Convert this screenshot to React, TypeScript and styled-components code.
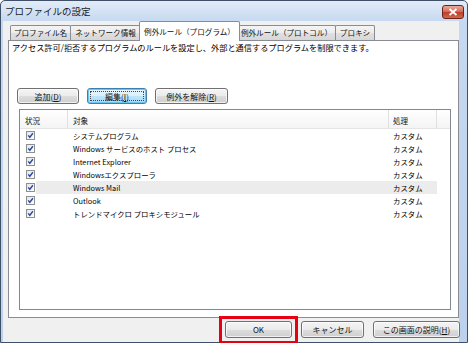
import React from 'react';
import styled, { createGlobalStyle } from 'styled-components';

const GlobalStyle = createGlobalStyle`
  html, body {
    margin: 0;
    padding: 0;
    background: #fff;
  }
  body {
    font-family: "Noto Sans CJK JP", "Noto Sans", sans-serif;
    color: #000;
  }
`;

const Window = styled.div`
  position: relative;
  width: 468px;
  height: 343px;
  box-sizing: border-box;
  border: 1px solid #3f5068;
  border-radius: 5px 5px 0 0;
  background: linear-gradient(180deg, #e2ecf8 0px, #c6d9f0 20px, #bcd1ec 100%);
  display: flex;
  flex-direction: column;
`;

const TitleBar = styled.div`
  flex: none;
  height: 20px;
  display: flex;
  align-items: center;
  justify-content: space-between;
  padding: 0 3px 0 4px;
`;

const Title = styled.span`
  font-size: 9.5px;
  line-height: 12px;
  color: #1a1a1a;
`;

const CloseButton = styled.div`
  width: 22px;
  height: 14px;
  margin-top: 2px;
  box-sizing: border-box;
  border: 1px solid #6b2217;
  border-radius: 3px;
  background: linear-gradient(180deg, #eba99b 0%, #d4705a 45%, #bf3d28 55%, #d06a4f 100%);
  display: flex;
  align-items: center;
  justify-content: center;
`;

const Client = styled.div`
  flex: 1;
  margin: 0 8px 0 2px;
  background: #f0f0f0;
  display: flex;
  flex-direction: column;
  padding-left: 5px;
`;

const TabStrip = styled.div`
  flex: none;
  height: 19px;
  display: flex;
  align-items: flex-end;
  padding-left: 2px;
`;

const Tab = styled.div<{ $w: number; $active?: boolean }>`
  position: relative;
  box-sizing: border-box;
  width: ${(p) => p.$w}px;
  height: ${(p) => (p.$active ? 20 : 15)}px;
  margin-left: ${(p) => (p.$active ? -2 : -1)}px;
  margin-right: ${(p) => (p.$active ? -2 : 0)}px;
  margin-bottom: ${(p) => (p.$active ? -1 : 0)}px;
  z-index: ${(p) => (p.$active ? 2 : 1)};
  border: 1px solid #898c95;
  border-bottom: none;
  border-radius: 2px 2px 0 0;
  background: ${(p) =>
    p.$active ? '#fff' : 'linear-gradient(180deg, #f4f4f4 0%, #ececec 50%, #e0e0e0 51%, #d6d6d6 100%)'};
  font-size: 7.6px;
  line-height: 10px;
  padding-top: ${(p) => (p.$active ? 5 : 2)}px;
  text-align: center;
  white-space: nowrap;
  color: #111;

  &:first-child {
    margin-left: 0;
  }
`;

const Panel = styled.div`
  flex: none;
  height: 278px;
  box-sizing: border-box;
  border: 1px solid #898c95;
  background: #fff;
  display: flex;
  flex-direction: column;
  padding: 1px 0 0 3px;
`;

const Description = styled.div`
  font-size: 8.2px;
  line-height: 10px;
  white-space: nowrap;
`;

const ButtonRow = styled.div`
  display: flex;
  gap: 8px;
  margin: 36px 0 0 5px;
`;

const Button = styled.div<{ $w: number; $h?: number; $focus?: boolean }>`
  position: relative;
  box-sizing: border-box;
  width: ${(p) => p.$w}px;
  height: ${(p) => p.$h ?? 16}px;
  border: 1px solid ${(p) => (p.$focus ? '#3c7fb1' : '#707070')};
  border-radius: 3px;
  background: ${(p) =>
    p.$focus
      ? 'linear-gradient(180deg, #eaf6fd 0%, #d9f0fc 50%, #bee6fd 51%, #a7d9f5 100%)'
      : 'linear-gradient(180deg, #f4f4f4 0%, #ebebeb 50%, #dddddd 51%, #cfcfcf 100%)'};
  box-shadow: inset 0 0 0 1px ${(p) => (p.$focus ? '#6fc3ef' : 'rgba(255,255,255,0.7)')};
  font-size: 8px;
  display: flex;
  align-items: center;
  justify-content: center;
  white-space: nowrap;
  color: #111;

  ${(p) =>
    p.$focus &&
    `&::after {
      content: '';
      position: absolute;
      inset: 2px;
      border: 1px dotted #444;
    }`}
`;

const ListView = styled.div`
  box-sizing: border-box;
  width: 432px;
  height: 201px;
  margin: 5px 0 0 7px;
  border: 1px solid #828790;
  background: #fff;
`;

const HeaderRow = styled.div`
  display: flex;
  height: 18px;
  border-bottom: 1px solid #e5e5e5;
  background: linear-gradient(180deg, #ffffff 0%, #f4f4f5 100%);
`;

const HeaderCell = styled.div<{ $w: number; $pad: number }>`
  box-sizing: border-box;
  width: ${(p) => p.$w}px;
  padding: 0 0 2px ${(p) => p.$pad}px;
  border-right: 1px solid #e0e0e0;
  font-size: 7.6px;
  line-height: 10px;
  display: flex;
  align-items: flex-end;
  color: #111;
`;

const Row = styled.div`
  display: flex;
  height: 13px;
`;

const CheckCell = styled.div`
  box-sizing: border-box;
  width: 16px;
  padding-left: 6px;
  display: flex;
  align-items: center;
`;

const RowBody = styled.div<{ $selected?: boolean }>`
  display: grid;
  grid-template-columns: 353px 48px;
  background: ${(p) => (p.$selected ? '#ececec' : 'transparent')};
  font-size: 7.4px;
  line-height: 13px;
  white-space: nowrap;
`;

const NameCell = styled.div`
  padding-left: 37px;
`;

const ActionCell = styled.div`
  padding-left: 4px;
`;

const FooterRow = styled.div`
  display: flex;
  justify-content: flex-end;
  gap: 9px;
  padding-top: 3px;
  margin-right: -1px;
`;

const Highlight = styled.div`
  position: relative;

  &::after {
    content: '';
    position: absolute;
    left: -6px;
    right: -6px;
    top: -5px;
    bottom: -6px;
    border: 3px solid #e60012;
  }
`;

const CheckBox = () => (
  <svg width="9" height="9" viewBox="0 0 9 9">
    <defs>
      <linearGradient id="cbg" x1="0" y1="0" x2="1" y2="1">
        <stop offset="0" stopColor="#dfe6ee" />
        <stop offset="1" stopColor="#ffffff" />
      </linearGradient>
    </defs>
    <rect x="0.5" y="0.5" width="8" height="8" fill="url(#cbg)" stroke="#8f8f8f" />
    <path d="M2.2 4.4 L3.8 6.3 L6.9 2.3" fill="none" stroke="#2b4a9c" strokeWidth="1.4" />
  </svg>
);

const tabs = [
  { label: 'プロファイル名', w: 61 },
  { label: 'ネットワーク情報', w: 71 },
  { label: '例外ルール（プログラム）', w: 101, active: true },
  { label: '例外ルール（プロトコル）', w: 99 },
  { label: 'プロキシ', w: 40 },
];

const programs = [
  'システムプログラム',
  'Windows サービスのホスト プロセス',
  'Internet Explorer',
  'Windowsエクスプローラ',
  'Windows Mail',
  'Outlook',
  'トレンドマイクロ プロキシモジュール',
];

export default function App() {
  return (
    <>
      <GlobalStyle />
      <Window>
        <TitleBar>
          <Title>プロファイルの設定</Title>
          <CloseButton>
            <svg width="10" height="8" viewBox="0 0 10 8">
              <path d="M1.5 1 L8.5 7 M8.5 1 L1.5 7" stroke="#fff" strokeWidth="1.8" />
            </svg>
          </CloseButton>
        </TitleBar>
        <Client>
          <TabStrip>
            {tabs.map((t) => (
              <Tab key={t.label} $w={t.w} $active={t.active}>
                {t.label}
              </Tab>
            ))}
          </TabStrip>
          <Panel>
            <Description>
              アクセス許可/拒否するプログラムのルールを設定し、外部と通信するプログラムを制限できます。
            </Description>
            <ButtonRow>
              <Button $w={62}>
                追加(<u>D</u>)
              </Button>
              <Button $w={60} $focus>
                編集(<u>I</u>)
              </Button>
              <Button $w={73}>
                例外を解除(<u>R</u>)
              </Button>
            </ButtonRow>
            <ListView>
              <HeaderRow>
                <HeaderCell $w={48} $pad={5}>状況</HeaderCell>
                <HeaderCell $w={321} $pad={5}>対象</HeaderCell>
                <HeaderCell $w={48} $pad={4}>処理</HeaderCell>
              </HeaderRow>
              {programs.map((name, i) => (
                <Row key={name}>
                  <CheckCell>
                    <CheckBox />
                  </CheckCell>
                  <RowBody $selected={i === 4}>
                    <NameCell>{name}</NameCell>
                    <ActionCell>カスタム</ActionCell>
                  </RowBody>
                </Row>
              ))}
            </ListView>
          </Panel>
          <FooterRow>
            <Highlight>
              <Button $w={67} $h={17}>OK</Button>
            </Highlight>
            <Button $w={63} $h={17}>キャンセル</Button>
            <Button $w={87} $h={17}>
              この画面の説明(<u>H</u>)
            </Button>
          </FooterRow>
        </Client>
      </Window>
    </>
  );
}
